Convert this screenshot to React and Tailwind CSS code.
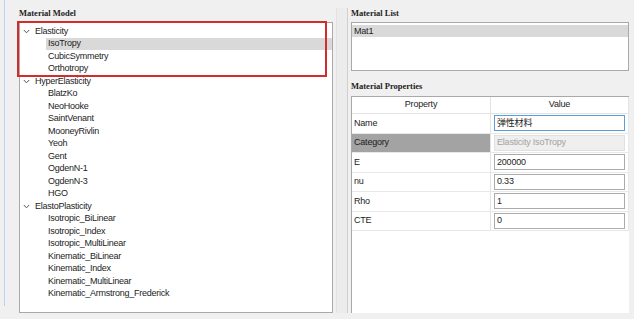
import React from 'react';

const tree = [
  { label: 'Elasticity', children: ['IsoTropy', 'CubicSymmetry', 'Orthotropy'] },
  {
    label: 'HyperElasticity',
    children: ['BlatzKo', 'NeoHooke', 'SaintVenant', 'MooneyRivlin', 'Yeoh', 'Gent', 'OgdenN-1', 'OgdenN-3', 'HGO'],
  },
  {
    label: 'ElastoPlasticity',
    children: [
      'Isotropic_BiLinear',
      'Isotropic_Index',
      'Isotropic_MultiLinear',
      'Kinematic_BiLinear',
      'Kinematic_Index',
      'Kinematic_MultiLinear',
      'Kinematic_Armstrong_Frederick',
    ],
  },
];

const props = [
  { name: 'Name', value: '弹性材料', focus: true },
  { name: 'Category', value: 'Elasticity IsoTropy', disabled: true },
  { name: 'E', value: '200000' },
  { name: 'nu', value: '0.33' },
  { name: 'Rho', value: '1' },
  { name: 'CTE', value: '0' },
];

// little "v" expander arrow
const Chevron = () => (
  <svg width="7" height="5" viewBox="0 0 7 5" className="shrink-0">
    <path d="M0.8 1 L3.5 3.8 L6.2 1" fill="none" stroke="#555" strokeWidth="1" />
  </svg>
);

const GroupLabel = ({ children, className = '' }) => (
  <div
    className={`flex items-center text-[8.5px] font-bold text-[#222] font-['Liberation_Serif',serif] ${className}`}
  >
    {children}
  </div>
);

const App = () => {
  return (
    <div className="relative w-[634px] h-[319px] bg-[#f0f0f0] overflow-hidden flex font-['Liberation_Sans','Noto_Sans_CJK_SC',sans-serif] text-[#1c1c1c]">
      {/* window edge */}
      <div className="w-[4px] shrink-0" />
      <div className="w-px h-[306px] bg-[#b7d3ee] shrink-0" />

      {/* Material Model */}
      <div className="ml-[14px] w-[314px] shrink-0 flex flex-col pt-[5px]">
        <GroupLabel className="h-[17px]">Material Model</GroupLabel>
        <div className="h-[291px] bg-white border border-[#a9a9a9] pt-[2px] text-[9px] tracking-[-0.25px]">
          {tree.map((group) => (
            <div key={group.label}>
              <div className="h-[12.5px] flex items-center pl-[3px]">
                <Chevron />
                <span className="ml-[5px] leading-none">{group.label}</span>
              </div>
              {group.children.map((c) => (
                <div key={c} className="h-[12.5px] flex items-center pl-[26px]">
                  <div
                    className={`flex-1 h-[12px] flex items-center pl-[2px] ${
                      c === 'IsoTropy' ? 'bg-[#d9d9d9]' : ''
                    }`}
                  >
                    <span className="leading-none">{c}</span>
                  </div>
                </div>
              ))}
            </div>
          ))}
        </div>
      </div>

      {/* splitter */}
      <div className="w-[18px] shrink-0 flex pt-[8px]">
        <div className="w-[3px]" />
        <div className="w-px h-[305px] bg-[#e2e2e2]" />
        <div className="w-[10px] h-[305px] bg-[#ececec]" />
        <div className="w-px h-[305px] bg-[#cfcfcf]" />
      </div>

      {/* right side */}
      <div className="w-[278px] shrink-0 flex flex-col pt-[5px]">
        <GroupLabel className="h-[17px]">Material List</GroupLabel>
        <div className="h-[49px] bg-white border border-[#a9a9a9] pt-[2px] text-[9px] tracking-[-0.2px]">
          <div className="h-[12px] bg-[#d9d9d9] flex items-center pl-[2px]">
            <span className="leading-none">Mat1</span>
          </div>
        </div>

        <GroupLabel className="pt-[5px] h-[25px]">Material Properties</GroupLabel>
        <div className="h-[217px] bg-white border-l border-t border-[#a9a9a9] text-[9px] tracking-[-0.2px]">
          <div className="flex h-[17px] border-b border-r border-[#e3e3e3]">
            <div className="w-[139px] flex items-center justify-center border-r border-[#e3e3e3]">Property</div>
            <div className="flex-1 flex items-center justify-center">Value</div>
          </div>
          {props.map((p) => (
            <div key={p.name} className="flex h-[19.5px] border-b border-r border-[#e8e8e8]">
              <div
                className={`w-[139px] flex items-center pl-[2px] border-r border-[#e3e3e3] ${
                  p.disabled ? 'bg-[#a3a3a3]' : ''
                }`}
              >
                {p.name}
              </div>
              <div className="flex-1 flex items-center pl-[3px] pr-[3px]">
                <div
                  className={`w-full h-[16px] flex items-center pl-[2px] border ${
                    p.focus
                      ? 'border-[#5b9fd9] bg-white'
                      : p.disabled
                      ? 'border-[#e0e0e0] bg-[#efefef] text-[#a2a2a2]'
                      : 'border-[#ababab] bg-white'
                  }`}
                >
                  {p.value}
                </div>
              </div>
            </div>
          ))}
        </div>
      </div>

      {/* highlight annotation */}
      <div className="absolute left-[17px] top-[21px] w-[310px] h-[56px] border-2 border-[#d42b2b]" />
    </div>
  );
};

export default App;
